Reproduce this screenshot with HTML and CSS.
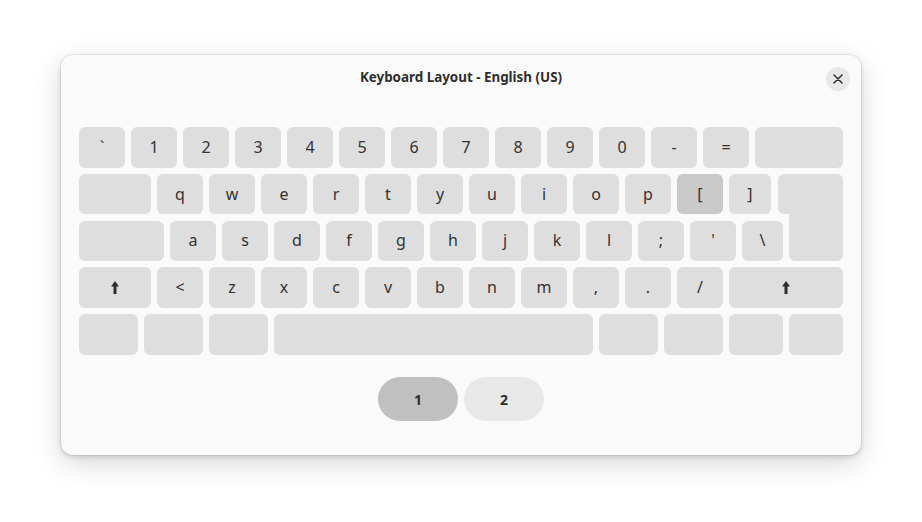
FILE: index.html
```html
<!DOCTYPE html>
<html lang="en">
<head>
<meta charset="utf-8">
<title>Keyboard Layout - English (US)</title>
<link rel="stylesheet" href="styles.css">
</head>
<body>
<div class="window">
  <header class="header">
    <span class="spacer"></span>
    <h1 class="title">Keyboard Layout - English (US)</h1>
    <button class="close" aria-label="Close">
      <svg width="10" height="10" viewBox="0 0 10 10"><path d="M1 1L9 9M9 1L1 9" stroke="#2e2e2e" stroke-width="1.5" stroke-linecap="round"/></svg>
    </button>
  </header>

  <div class="keyboard">
    <div class="row">
      <div class="key">`</div><div class="key">1</div><div class="key">2</div><div class="key">3</div><div class="key">4</div><div class="key">5</div><div class="key">6</div><div class="key">7</div><div class="key">8</div><div class="key">9</div><div class="key">0</div><div class="key">-</div><div class="key">=</div>
      <div class="key w88"></div>
    </div>
    <div class="row">
      <div class="key w72"></div>
      <div class="key">q</div><div class="key">w</div><div class="key">e</div><div class="key">r</div><div class="key">t</div><div class="key">y</div><div class="key">u</div><div class="key">i</div><div class="key">o</div><div class="key">p</div><div class="key active">[</div>
      <div class="key w42">]</div>
      <div class="key enter-top"></div>
    </div>
    <div class="row">
      <div class="key w85"></div>
      <div class="key">a</div><div class="key">s</div><div class="key">d</div><div class="key">f</div><div class="key">g</div><div class="key">h</div><div class="key">j</div><div class="key">k</div><div class="key">l</div><div class="key">;</div><div class="key">'</div>
      <div class="key w41">\</div>
      <div class="key enter-bottom"></div>
    </div>
    <div class="row">
      <div class="key w72"><svg class="shift" width="8" height="13" viewBox="0 0 8 13"><path d="M4 0L8 5.5H5.5V13H2.5V5.5H0Z" fill="#2e2e2e"/></svg></div>
      <div class="key">&lt;</div><div class="key">z</div><div class="key">x</div><div class="key">c</div><div class="key">v</div><div class="key">b</div><div class="key">n</div><div class="key">m</div><div class="key">,</div><div class="key">.</div><div class="key">/</div>
      <div class="key w114"><svg class="shift" width="8" height="13" viewBox="0 0 8 13"><path d="M4 0L8 5.5H5.5V13H2.5V5.5H0Z" fill="#2e2e2e"/></svg></div>
    </div>
    <div class="row">
      <div class="key w59"></div><div class="key w59"></div><div class="key w59"></div>
      <div class="key w319"></div>
      <div class="key w59"></div><div class="key w59"></div>
      <div class="key w54"></div><div class="key w54"></div>
    </div>
  </div>

  <div class="pages">
    <button class="page selected">1</button>
    <button class="page">2</button>
  </div>
</div>
</body>
</html>
```

FILE: styles.css
```css
* { box-sizing: border-box; }

html, body {
  margin: 0;
  padding: 0;
  background: #ffffff;
}

html { height: 100%; }

body {
  min-height: 100%;
  font-family: "Noto Sans", "Open Sans", sans-serif;
  color: #2e2e2e;
  padding: 55px 0 0 61px;
}

.window {
  width: 800px;
  height: 400px;
  background: #fafafa;
  border-radius: 12px;
  box-shadow: 0 0 0 1px rgba(0, 0, 0, 0.06), 0 2px 5px rgba(0, 0, 0, 0.14), 0 8px 28px rgba(0, 0, 0, 0.16);
  padding: 0 18px;
}

.header {
  height: 47px;
  margin: 0 -7px;
  display: grid;
  grid-template-columns: 1fr auto 1fr;
  align-items: center;
}

.title {
  margin: 0;
  font-size: 13.4px;
  font-weight: 700;
  color: #2e2e2e;
  padding-bottom: 3px;
}

.close {
  justify-self: end;
  width: 24px;
  height: 24px;
  border-radius: 50%;
  border: none;
  padding: 0;
  background: #e8e8e8;
  display: flex;
  align-items: center;
  justify-content: center;
}

.keyboard {
  margin-top: 25px;
  display: flex;
  flex-direction: column;
  gap: 6.25px;
}

.row {
  display: flex;
  gap: 6px;
  align-items: flex-start;
}

.key {
  width: 46px;
  height: 40.5px;
  flex: none;
  background: #dedede;
  border-radius: 6px;
  display: flex;
  align-items: center;
  justify-content: center;
  font-size: 16px;
  color: #333333;
  padding-bottom: 1px;
}

.key.active { background: #c9c9c9; }

.w41 { width: 41px; }
.w42 { width: 42px; }
.w54 { width: 54px; }
.w59 { width: 59px; }
.w72 { width: 72px; }
.w85 { width: 85px; }
.w88 { width: 88px; }
.w114 { width: 114px; }
.w319 { width: 319px; }

.enter-top {
  width: 65px;
  margin-left: 1px;
  border-radius: 6px 6px 0 6px;
}

.enter-bottom {
  width: 54px;
  height: 46.75px;
  margin-top: -6.25px;
  border-radius: 0 0 6px 6px;
}

.shift { display: block; }

.pages {
  margin-top: 22.5px;
  display: flex;
  justify-content: center;
  gap: 6px;
}

.page {
  width: 80px;
  height: 44px;
  border: none;
  border-radius: 22px;
  background: #e8e8e8;
  font-family: "Noto Sans", "Open Sans", sans-serif;
  font-size: 14px;
  font-weight: 700;
  color: #2e2e2e;
  padding: 0;
}

.page.selected { background: #c0c0c0; }
```
